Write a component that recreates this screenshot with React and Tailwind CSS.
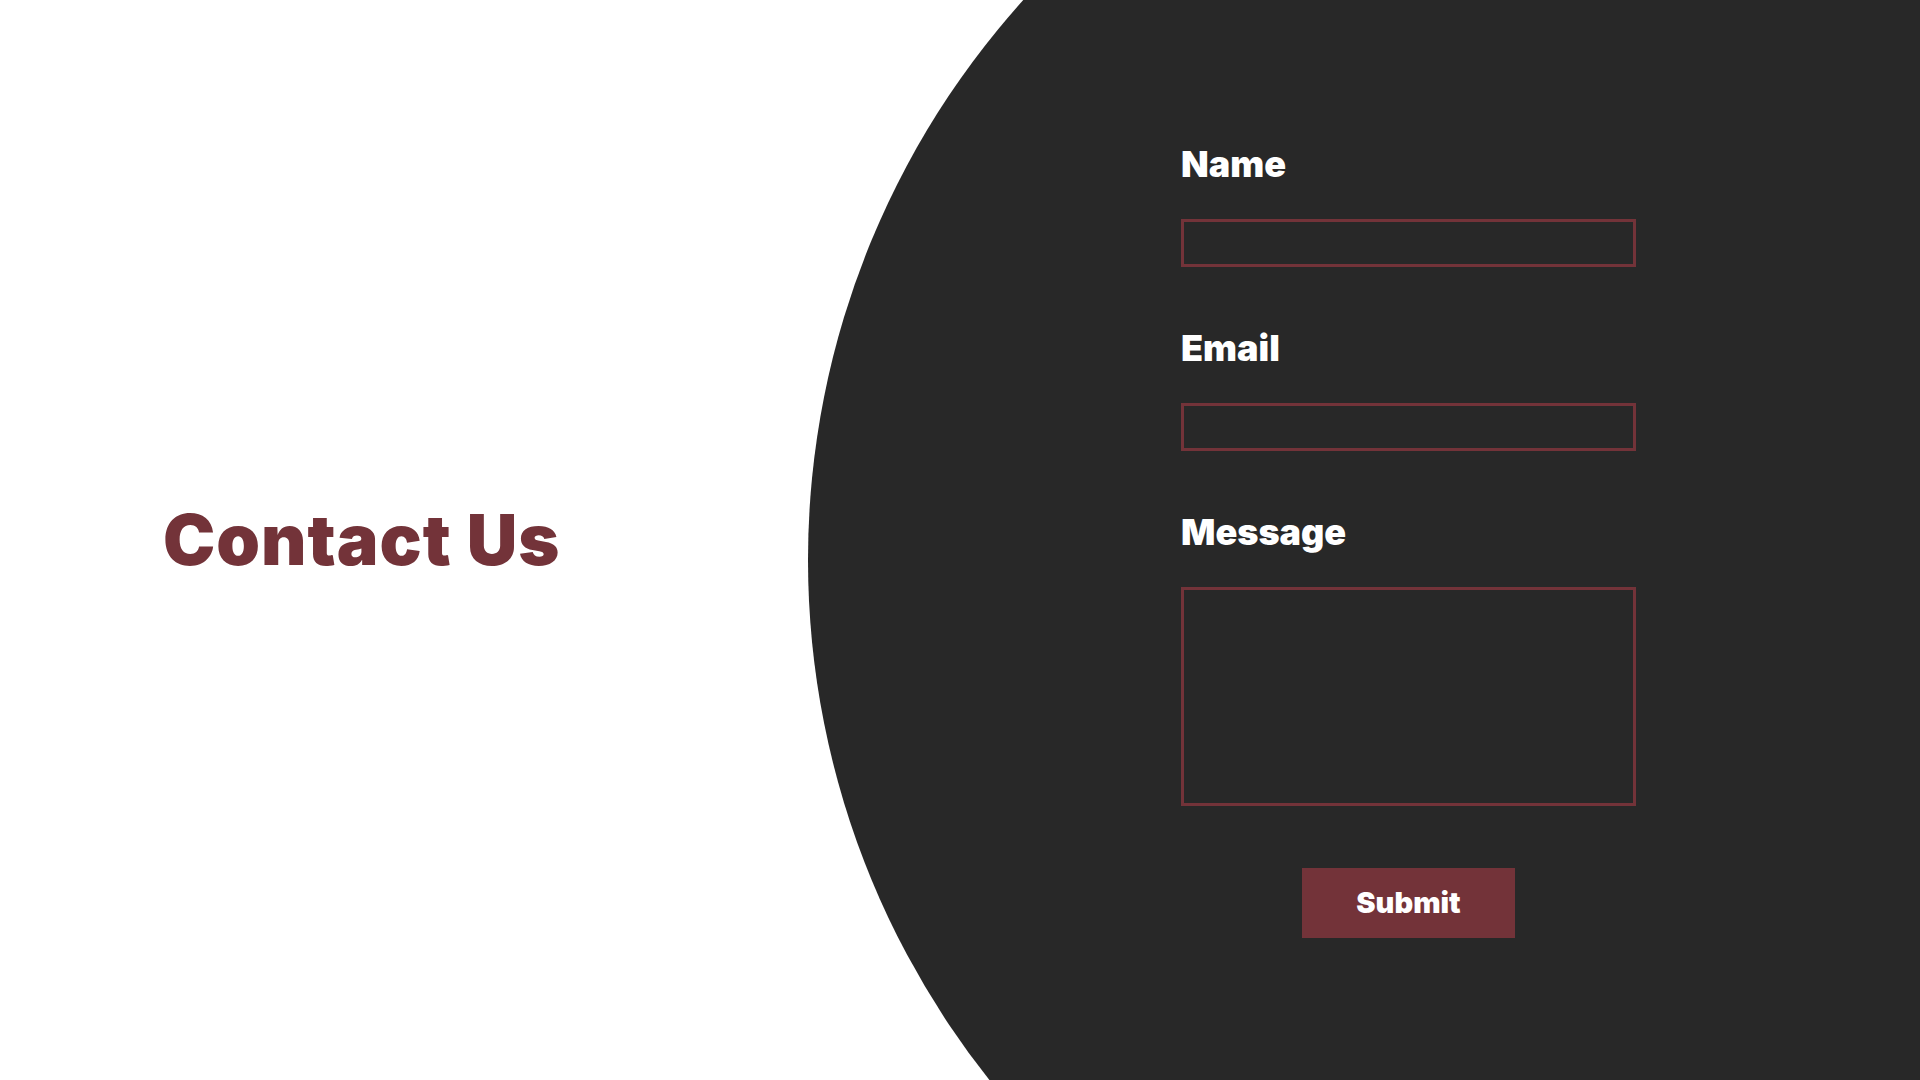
export default function App() {
  return (
    <div className="relative h-screen w-full overflow-hidden bg-white font-['Inter',sans-serif]">
      {/* big dark disc behind the form */}
      <div className="absolute left-[808px] top-[-276px] h-[1672px] w-[1672px] rounded-full bg-[#282828]" />

      <div className="relative flex h-full items-center">
        <div className="w-[1181px] pl-[163px]">
          <h1 className="text-[70px] font-black leading-none tracking-[1px] text-[#733339]">
            Contact Us
          </h1>
        </div>

        <form className="flex w-[455px] flex-col">
          <label className="mb-[33px] text-[36px] font-black leading-[44px] text-white">
            Name
          </label>
          <input
            type="text"
            className="h-[48px] w-full border-[3px] border-[#733339] bg-transparent px-3 text-white outline-none"
          />

          <label className="mb-[33px] mt-[59px] text-[36px] font-black leading-[44px] text-white">
            Email
          </label>
          <input
            type="email"
            className="h-[48px] w-full border-[3px] border-[#733339] bg-transparent px-3 text-white outline-none"
          />

          <label className="mb-[33px] mt-[59px] text-[36px] font-black leading-[44px] text-white">
            Message
          </label>
          <textarea className="h-[219px] w-full resize-none border-[3px] border-[#733339] bg-transparent p-3 text-white outline-none" />

          <button
            type="button"
            className="mt-[62px] h-[70px] w-[213px] self-center bg-[#733339] text-[29px] font-black text-white"
          >
            Submit
          </button>
        </form>
      </div>
    </div>
  );
}
